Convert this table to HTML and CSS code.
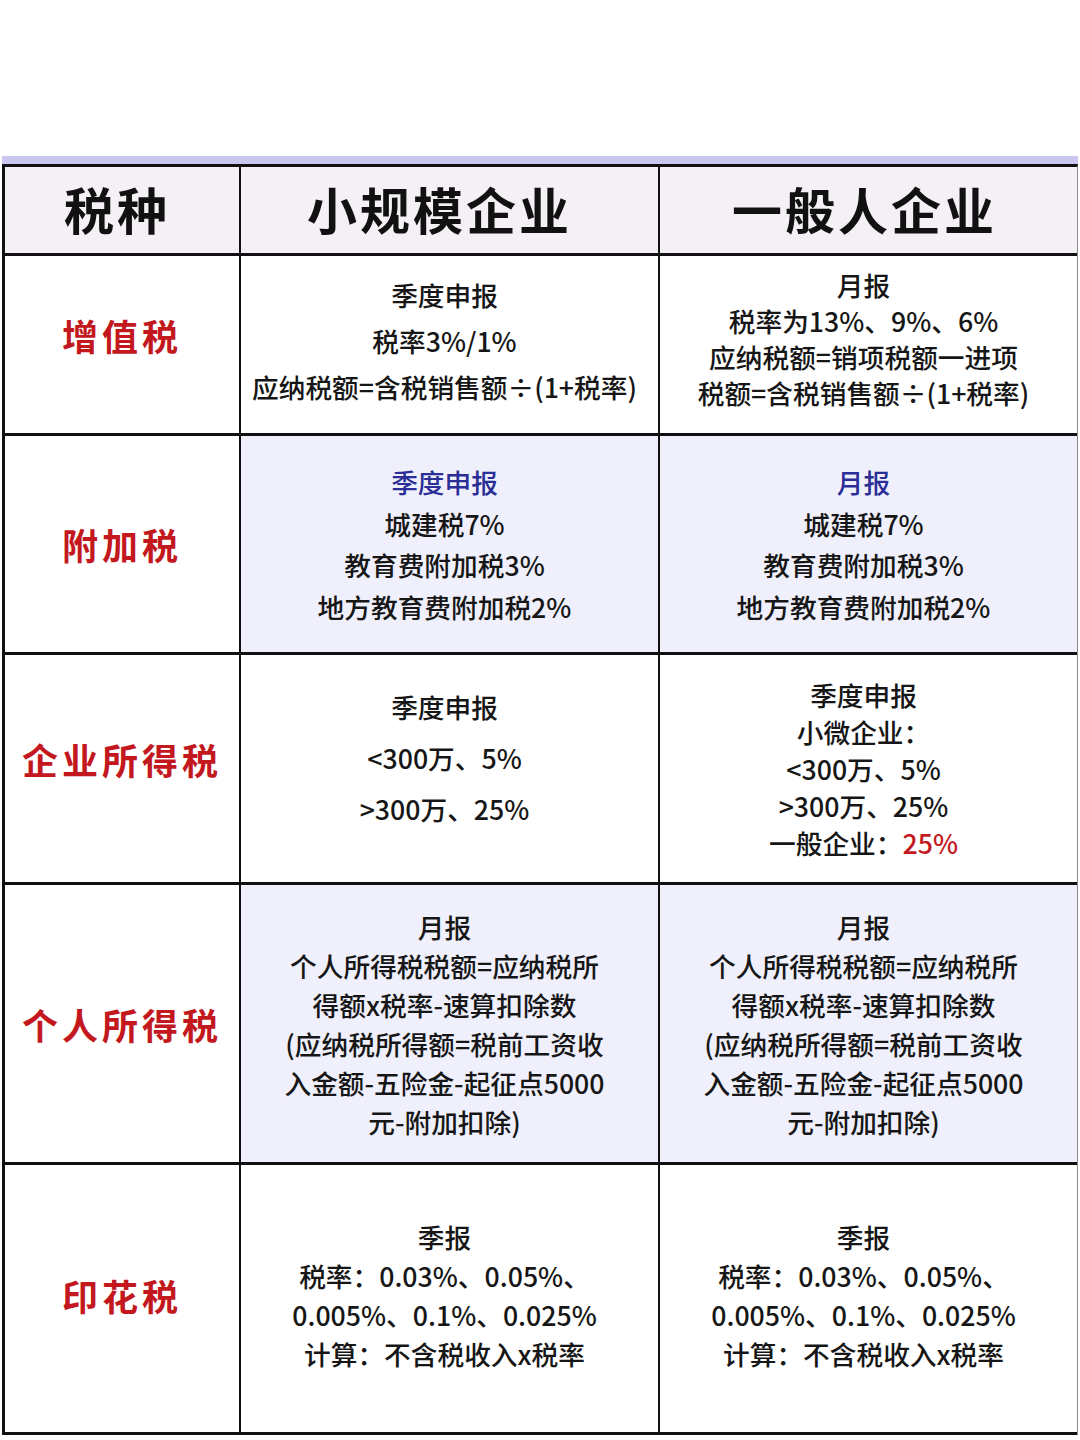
FILE: index.html
```html
<!DOCTYPE html>
<html lang="zh-CN">
<head>
<meta charset="utf-8">
<title>税种对比</title>
<link rel="stylesheet" href="styles.css">
</head>
<body>
<div class="sheet">
  <div class="bar"></div>
  <div class="table">
    <div class="cell head">税种</div>
    <div class="cell head head-mid">小规模企业</div>
    <div class="cell head head-end">一般人企业</div>

    <div class="cell label up10">增值税</div>
    <div class="cell body lh46 up4">
      <p>季度申报</p>
      <p>税率3%/1%</p>
      <p>应纳税额=含税销售额÷(1+税率)</p>
    </div>
    <div class="cell body lh36 up6">
      <p>月报</p>
      <p>税率为13%、9%、6%</p>
      <p>应纳税额=销项税额一进项</p>
      <p>税额=含税销售额÷(1+税率)</p>
    </div>

    <div class="cell label">附加税</div>
    <div class="cell body tint lh41">
      <p class="blue">季度申报</p>
      <p>城建税7%</p>
      <p>教育费附加税3%</p>
      <p>地方教育费附加税2%</p>
    </div>
    <div class="cell body tint lh41">
      <p class="blue">月报</p>
      <p>城建税7%</p>
      <p>教育费附加税3%</p>
      <p>地方教育费附加税2%</p>
    </div>

    <div class="cell label up10">企业所得税</div>
    <div class="cell body lh51 up11">
      <p>季度申报</p>
      <p>&lt;300万、5%</p>
      <p>&gt;300万、25%</p>
    </div>
    <div class="cell body lh37">
      <p>季度申报</p>
      <p>小微企业：</p>
      <p>&lt;300万、5%</p>
      <p>&gt;300万、25%</p>
      <p>一般企业：<span class="red">25%</span></p>
    </div>

    <div class="cell label">个人所得税</div>
    <div class="cell body tint lh39">
      <p>月报</p>
      <p>个人所得税税额=应纳税所</p>
      <p>得额x税率-速算扣除数</p>
      <p>(应纳税所得额=税前工资收</p>
      <p>入金额-五险金-起征点5000</p>
      <p>元-附加扣除)</p>
    </div>
    <div class="cell body tint lh39">
      <p>月报</p>
      <p>个人所得税税额=应纳税所</p>
      <p>得额x税率-速算扣除数</p>
      <p>(应纳税所得额=税前工资收</p>
      <p>入金额-五险金-起征点5000</p>
      <p>元-附加扣除)</p>
    </div>

    <div class="cell label up4">印花税</div>
    <div class="cell body lh39 up4">
      <p>季报</p>
      <p>税率：0.03%、0.05%、</p>
      <p>0.005%、0.1%、0.025%</p>
      <p>计算：不含税收入x税率</p>
    </div>
    <div class="cell body lh39 up4">
      <p>季报</p>
      <p>税率：0.03%、0.05%、</p>
      <p>0.005%、0.1%、0.025%</p>
      <p>计算：不含税收入x税率</p>
    </div>
  </div>
</div>
</body>
</html>
```

FILE: styles.css
```css
html, body {
  margin: 0;
  padding: 0;
  background: #ffffff;
}

body {
  width: 1080px;
  height: 1440px;
  overflow: hidden;
  font-family: "Noto Sans CJK SC", "Noto Sans", sans-serif;
  color: #161616;
}

.sheet {
  margin: 156px 0 0 2px;
  width: 1076px;
}

.bar {
  height: 8px;
  background: #c9c7f1;
}

.table {
  display: grid;
  grid-template-columns: 236px 419px 1fr;
  grid-template-rows: 89px 180px 219px 230px 280px 270px;
  border-top: 3px solid #111111;
  border-left: 3px solid #111111;
  border-right: 1px solid #8a8a8a;
  box-sizing: border-box;
}

.cell {
  box-sizing: border-box;
  border-right: 2px solid #111111;
  border-bottom: 3px solid #111111;
  display: flex;
  flex-direction: column;
  align-items: center;
  justify-content: center;
  text-align: center;
  background: #ffffff;
}

.cell:nth-child(3n) {
  border-right: none;
}

.head {
  background: #f5f0f5;
  font-size: 50px;
  font-weight: 700;
  letter-spacing: 3px;
  color: #111111;
  padding-bottom: 4px;
  padding-right: 10px;
}

.head-mid {
  padding-right: 20px;
}

.head-end {
  padding-right: 8px;
}

.label {
  font-size: 36px;
  font-weight: 700;
  letter-spacing: 4px;
  color: #c3181e;
}

.body {
  font-size: 26.7px;
  font-weight: 500;
  padding-right: 10px;
}

.body p {
  margin: 0;
  white-space: nowrap;
}

.tint {
  background: #eff0fb;
}

.blue {
  color: #2a2e96;
}

.red {
  color: #c3181e;
}

.lh36 { line-height: 36px; }
.lh37 { line-height: 37px; }
.lh39 { line-height: 39px; }
.lh41 { line-height: 41.5px; }
.lh46 { line-height: 46px; }
.lh51 { line-height: 51px; }

.up4 { padding-bottom: 8px; }
.up6 { padding-bottom: 12px; }
.up10 { padding-bottom: 20px; }
.up11 { padding-bottom: 22px; }
```
